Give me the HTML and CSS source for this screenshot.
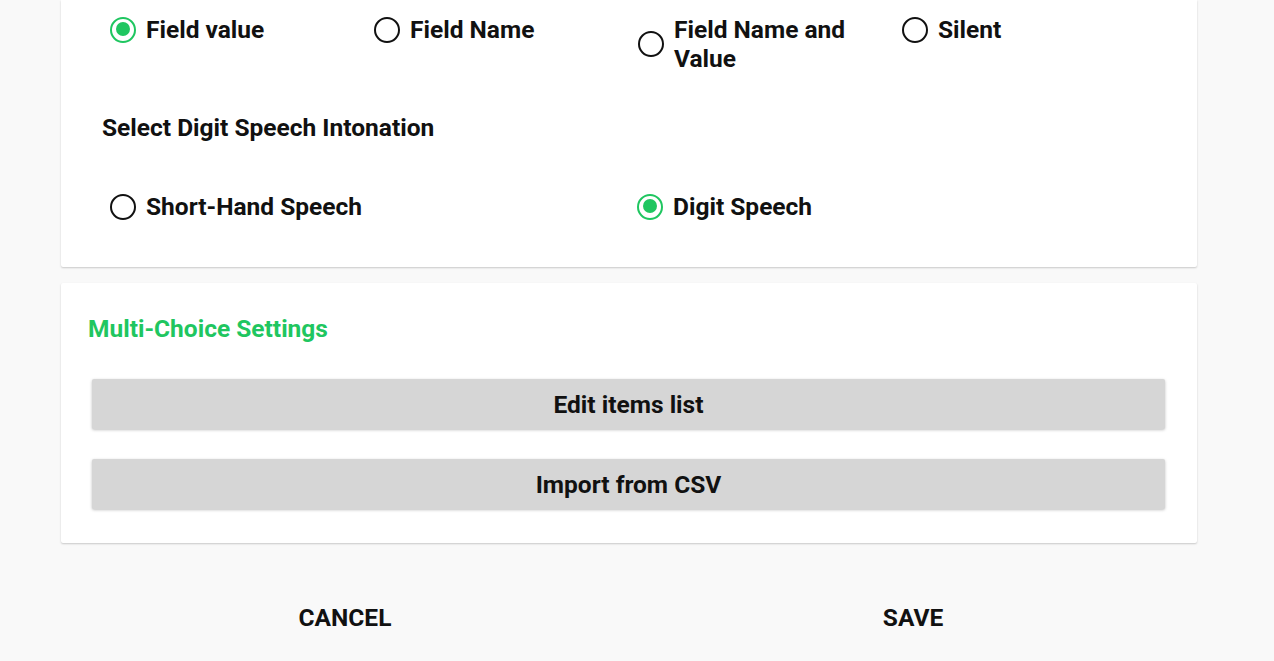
FILE: index.html
```html
<!DOCTYPE html>
<html>
<head>
<meta charset="utf-8">
<link rel="stylesheet" href="styles.css">
</head>
<body>
<div class="page">
  <section class="card card-top">
    <div class="radio-row four">
      <label class="radio-item"><span class="radio checked"></span><span class="label">Field value</span></label>
      <label class="radio-item"><span class="radio"></span><span class="label">Field Name</span></label>
      <label class="radio-item"><span class="radio"></span><span class="label">Field Name and Value</span></label>
      <label class="radio-item"><span class="radio"></span><span class="label">Silent</span></label>
    </div>
    <h3 class="sub-heading">Select Digit Speech Intonation</h3>
    <div class="radio-row two">
      <label class="radio-item"><span class="radio"></span><span class="label">Short-Hand Speech</span></label>
      <label class="radio-item"><span class="radio checked"></span><span class="label">Digit Speech</span></label>
    </div>
  </section>
  <section class="card card-multi">
    <h2 class="section-title">Multi-Choice Settings</h2>
    <div class="btn-list">
      <button class="gray-btn">Edit items list</button>
      <button class="gray-btn">Import from CSV</button>
    </div>
  </section>
  <div class="actions">
    <button class="text-btn">CANCEL</button>
    <button class="text-btn">SAVE</button>
  </div>
</div>
</body>
</html>
```
FILE: styles.css
```css
html, body {
  margin: 0;
  padding: 0;
  background: #f9f9f9;
  font-family: Roboto, "Noto Sans", sans-serif;
  color: #111;
}
.page {
  width: 1136px;
  margin-left: 61px;
}
.card {
  background: #fff;
  box-shadow: 0 1px 2px rgba(0,0,0,0.2);
  border-radius: 0 0 2px 2px;
}
.card-top {
  padding: 15px 0 46px 49px;
}
.radio-row {
  display: grid;
  align-items: start;
}
.radio-row.four {
  grid-template-columns: repeat(4, 264px);
}
.radio-row.two {
  grid-template-columns: repeat(2, 527px);
}
.radio-item {
  display: flex;
  align-items: center;
  gap: 10px;
  padding-right: 30px;
}
.radio {
  flex: none;
  box-sizing: border-box;
  width: 26px;
  height: 26px;
  border: 2.5px solid #111;
  border-radius: 50%;
  position: relative;
}
.radio.checked {
  border-color: #1fc660;
}
.radio.checked::after {
  content: "";
  position: absolute;
  left: 3.5px;
  top: 3.5px;
  width: 14px;
  height: 14px;
  border-radius: 50%;
  background: #1fc660;
}
.label {
  font-size: 24.5px;
  font-weight: 700;
  line-height: 29px;
}
.sub-heading {
  margin: 40px 0 50px -8px;
  font-size: 24.5px;
  font-weight: 700;
  line-height: 29px;
}
.card-multi {
  margin-top: 16px;
  padding: 31px 32px 34px 27px;
  border-radius: 2px;
}
.section-title {
  margin: 0 0 36px 0;
  color: #1fc660;
  font-size: 24.5px;
  font-weight: 700;
  line-height: 29px;
}
.btn-list {
  display: flex;
  flex-direction: column;
  gap: 30px;
  padding-left: 4px;
}
.gray-btn {
  height: 50px;
  border: none;
  border-radius: 2px;
  background: #d6d6d6;
  box-shadow: 0 1px 3px rgba(0,0,0,0.25);
  font-family: Roboto, sans-serif;
  font-size: 24.5px;
  font-weight: 700;
  color: #111;
}
.actions {
  display: grid;
  grid-template-columns: 1fr 1fr;
  margin-top: 49px;
}
.text-btn {
  height: 50px;
  border: none;
  background: transparent;
  font-family: Roboto, sans-serif;
  font-size: 24.5px;
  font-weight: 700;
  color: #111;
}
```
